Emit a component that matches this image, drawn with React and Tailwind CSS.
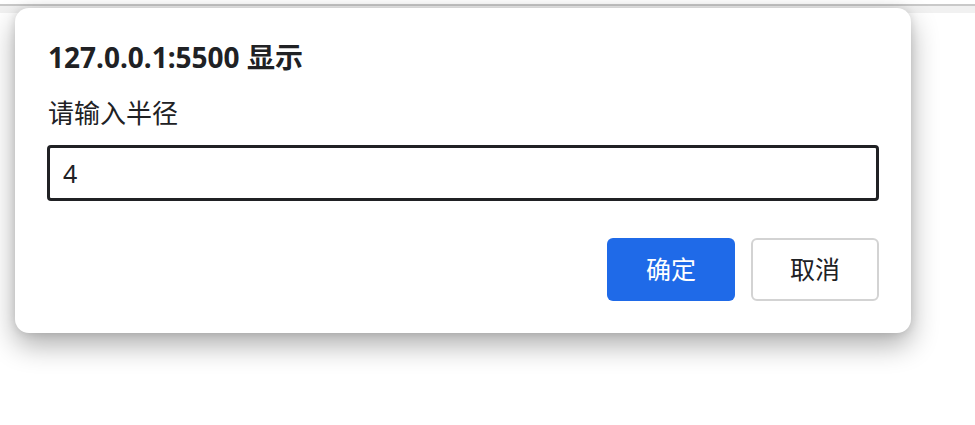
import { useState } from 'react';

const font = { fontFamily: '"Noto Sans", "Noto Sans CJK SC", sans-serif' };

export default function App() {
  const [value, setValue] = useState('4');

  return (
    <div className="relative w-[975px] h-[425px] bg-white overflow-hidden" style={font}>
      {/* browser toolbar edge */}
      <div className="h-[4px] bg-white" />
      <div className="h-[2px] bg-[#c9c9c9]" />
      <div className="h-[7px] bg-[#f1f1f1]" />

      {/* prompt dialog */}
      <div className="absolute left-[15px] top-[8px] w-[896px] h-[325px] bg-white rounded-[14px] shadow-[0_12px_28px_rgba(0,0,0,0.32),0_0_10px_rgba(0,0,0,0.12)] px-[32px] pt-[31px]">
        <h2 className="text-[28px] leading-[36px] font-bold text-[#202124] pl-[1px]">127.0.0.1:5500 显示</h2>
        <p className="mt-[21px] text-[26px] leading-[34px] text-[#202124] pl-[1px]">请输入半径</p>
        <input
          value={value}
          onChange={e => setValue(e.target.value)}
          className="mt-[15px] w-full h-[56px] border-[3px] border-[#202124] rounded-[4px] px-[13px] text-[25px] text-[#202124] outline-none"
        />
        <div className="flex justify-end gap-[16px] mt-[37px]">
          <button className="w-[128px] h-[63px] rounded-[6px] bg-[#1f6ae8] text-white text-[25px]">确定</button>
          <button className="w-[128px] h-[63px] rounded-[6px] border-2 border-[#d3d3d3] bg-white text-[#202124] text-[25px]">取消</button>
        </div>
      </div>
    </div>
  );
}
